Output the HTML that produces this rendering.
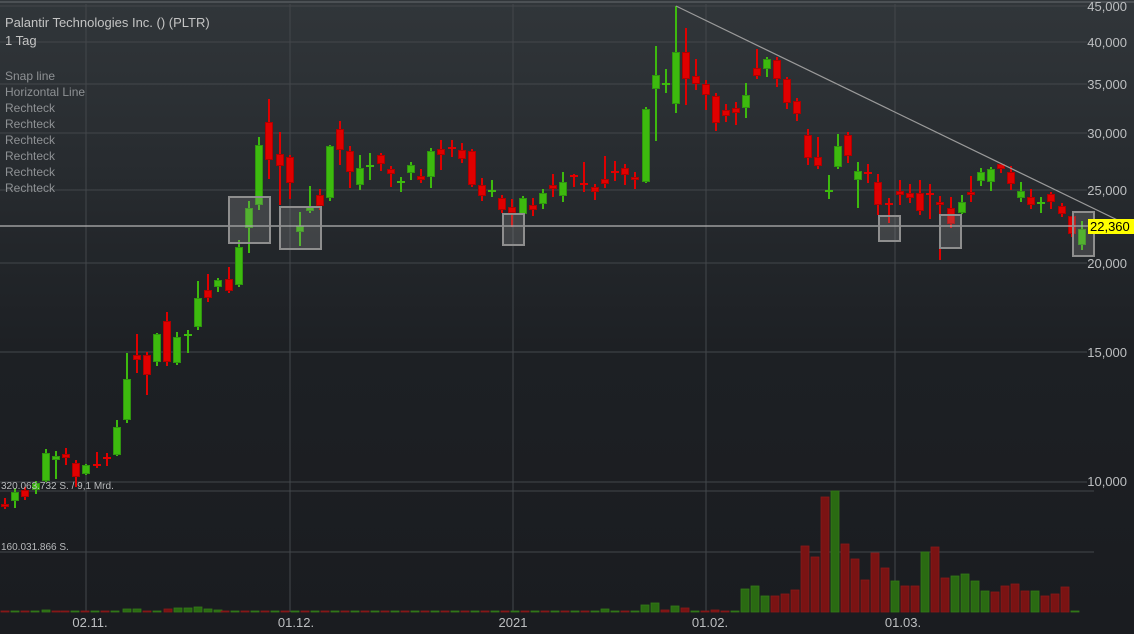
<!DOCTYPE html>
<html><head><meta charset="utf-8"><style>
html,body{margin:0;padding:0;background:#1a1c20;}
svg{display:block;font-family:"Liberation Sans",sans-serif;}
</style></head><body>
<svg id="s" width="1134" height="634" viewBox="0 0 1134 634" xmlns="http://www.w3.org/2000/svg">
<defs><linearGradient id="bg" x1="0" y1="0" x2="0" y2="1">
<stop offset="0" stop-color="#31363a"/><stop offset="0.55" stop-color="#1d2024"/><stop offset="1" stop-color="#1a1c20"/>
</linearGradient></defs>
<rect width="1134" height="634" fill="url(#bg)"/>
<line x1="0" y1="2" x2="1134" y2="2" stroke="#565a5e" stroke-width="1.5"/>
<g id="grid" stroke="#43474b" stroke-width="1"></g>
<g id="vol"></g>
<g id="cand"></g>
<g id="ov"></g>
<g fill="#c4c4c4" font-size="13">
<text x="5" y="27">Palantir Technologies Inc. () (PLTR)</text>
<text x="5" y="45">1 Tag</text>
</g>
<g fill="#8e9194" font-size="12">
<text x="5" y="80">Snap line</text><text x="5" y="96">Horizontal Line</text>
<text x="5" y="112">Rechteck</text><text x="5" y="128">Rechteck</text>
<text x="5" y="144">Rechteck</text><text x="5" y="160">Rechteck</text>
<text x="5" y="176">Rechteck</text><text x="5" y="192">Rechteck</text>
</g>
<g fill="#b8babc" font-size="10">
<text x="1" y="489">320.063.732 S. / 9,1 Mrd.</text>
<text x="1" y="550">160.031.866 S.</text>
</g>
<g fill="#bdbfc1" font-size="13" text-anchor="end">
<text x="1127" y="11">45,000</text><text x="1127" y="47">40,000</text>
<text x="1127" y="89">35,000</text><text x="1127" y="138">30,000</text>
<text x="1127" y="195">25,000</text><text x="1127" y="268">20,000</text>
<text x="1127" y="357">15,000</text><text x="1127" y="486">10,000</text>
</g>
<g fill="#bdbfc1" font-size="13" text-anchor="middle">
<text x="90" y="627">02.11.</text><text x="296" y="627">01.12.</text>
<text x="513" y="627">2021</text><text x="710" y="627">01.02.</text><text x="903" y="627">01.03.</text>
</g>
<rect x="1088" y="219" width="46" height="15" fill="#ffff00"/>
<text x="1090" y="231" font-size="13" fill="#000">22,360</text>
</svg>
<script>
var NS="http://www.w3.org/2000/svg";
function el(g,t,a){var e=document.createElementNS(NS,t);for(var k in a)e.setAttribute(k,a[k]);document.getElementById(g).appendChild(e);return e;}
[6,42,84,133,190,263,352,482].forEach(function(y){el("grid","line",{x1:0,y1:y,x2:1087,y2:y});});
[491,552].forEach(function(y){el("grid","line",{x1:0,y1:y,x2:1094,y2:y});});
[86,290,513,706,895].forEach(function(x){el("grid","line",{x1:x,y1:4,x2:x,y2:612});});
var C=[[5,504,507,498,509,'r'],[15,492,501,488,508,'g'],[25,490,497,487,500,'r'],[36,483,490,481,494,'g'],[46,453,481,449,482,'g'],[56,456,460,451,479,'g'],[66,454,458,448,465,'r'],[76,463,477,460,487,'r'],[86,465,474,464,475,'g'],[97,465,465,452,468,'r'],[107,458,458,453,466,'r'],[117,427,455,420,456,'g'],[127,379,420,353,423,'g'],[137,355,360,334,373,'r'],[147,355,375,352,395,'r'],[157,334,362,333,366,'g'],[167,321,362,312,366,'r'],[177,337,363,332,365,'g'],[188,335,335,330,353,'g'],[198,298,327,281,330,'g'],[208,290,298,274,302,'r'],[218,280,287,278,292,'g'],[229,279,291,267,293,'r'],[239,247,285,240,287,'g'],[249,208,228,201,253,'g'],[259,145,205,137,210,'g'],[269,122,160,99,179,'r'],[280,154,166,132,205,'r'],[290,157,183,155,199,'r'],[300,226,232,212,246,'g'],[310,206,211,186,213,'g'],[320,195,206,189,210,'r'],[330,146,198,145,201,'g'],[340,129,150,121,165,'r'],[350,151,172,146,188,'r'],[360,168,185,155,190,'g'],[370,166,166,153,180,'g'],[381,155,164,153,171,'r'],[391,169,174,166,187,'r'],[401,182,182,177,192,'g'],[411,165,173,162,180,'g'],[421,176,180,169,183,'r'],[431,151,177,148,188,'g'],[441,149,155,140,170,'r'],[452,148,148,140,157,'r'],[462,150,159,143,163,'r'],[472,151,185,149,187,'r'],[482,185,196,178,201,'r'],[492,191,191,180,197,'g'],[502,198,210,195,213,'r'],[512,207,213,199,227,'r'],[523,198,214,196,215,'g'],[533,205,210,198,216,'r'],[543,193,204,189,209,'g'],[553,185,189,174,197,'r'],[563,182,196,172,202,'g'],[574,176,176,174,187,'r'],[584,184,184,162,192,'r'],[595,187,192,184,200,'r'],[605,179,184,156,188,'r'],[615,172,172,161,181,'r'],[625,168,175,164,185,'r'],[635,177,180,172,189,'r'],[646,109,182,107,183,'g'],[656,75,89,46,141,'g'],[666,84,84,69,93,'g'],[676,52,104,6,113,'g'],[686,52,79,28,105,'r'],[696,76,84,59,90,'r'],[706,84,95,80,110,'r'],[716,96,123,93,131,'r'],[726,110,116,104,122,'r'],[736,108,113,102,125,'r'],[746,95,108,83,118,'g'],[757,68,76,49,79,'r'],[767,59,69,57,77,'g'],[777,60,79,57,87,'r'],[787,79,103,77,109,'r'],[797,101,114,98,121,'r'],[808,135,158,129,165,'r'],[818,157,166,137,169,'r'],[829,191,191,175,199,'g'],[838,146,167,134,169,'g'],[848,135,156,132,163,'r'],[858,171,180,162,208,'g'],[868,173,173,164,183,'r'],[878,182,205,174,215,'r'],[889,204,204,198,223,'r'],[900,191,195,180,205,'r'],[910,193,198,184,203,'r'],[920,193,211,180,215,'r'],[930,194,194,184,219,'r'],[940,202,205,196,260,'r'],[951,208,224,197,228,'r'],[962,202,213,195,214,'g'],[971,192,195,176,202,'r'],[981,172,181,168,186,'g'],[991,169,182,167,191,'g'],[1001,164,169,163,173,'r'],[1011,172,184,166,190,'r'],[1021,191,198,182,202,'g'],[1031,197,205,189,209,'r'],[1041,203,203,197,213,'g'],[1051,194,202,192,209,'r'],[1062,206,214,203,217,'r'],[1072,216,234,216,237,'r'],[1082,229,245,221,250,'g']];
C.forEach(function(c){var col=c[5]=='g'?'#3dba0e':'#e00000',bd=c[5]=='g'?'#2f9410':'#b00000';
el("cand","rect",{x:c[0]-1,y:c[3],width:2,height:c[4]-c[3],fill:col});
if(c[2]-c[1]<2){el("cand","rect",{x:c[0]-4,y:c[1]-1,width:8,height:2,fill:col});}
else el("cand","rect",{x:c[0]-3.5,y:c[1]+0.5,width:7,height:c[2]-c[1]-1,fill:col,stroke:bd,"stroke-width":1});});
var V={46:[610,'g'],56:[611,'r'],127:[609,'g'],137:[609,'g'],147:[611,'r'],157:[611,'g'],168:[609,'r'],178:[608,'g'],188:[608,'g'],198:[607,'g'],208:[609,'g'],218:[610,'g'],229:[610,'r'],239:[608,'g'],249:[606,'g'],259:[603,'g'],269:[604,'r'],280:[607,'r'],290:[610,'r'],300:[608,'r'],310:[609,'g'],320:[610,'r'],330:[608,'g'],340:[608,'r'],350:[610,'r'],421:[604,'r'],431:[609,'g'],605:[609,'g'],615:[611,'g'],645:[605,'g'],655:[603,'g'],665:[610,'r'],675:[606,'g'],685:[608,'r'],715:[610,'r'],745:[589,'g'],755:[586,'g'],765:[596,'g'],775:[596,'r'],785:[594,'r'],795:[590,'r'],805:[546,'r'],815:[557,'r'],825:[497,'r'],835:[491,'g'],845:[544,'r'],855:[559,'r'],865:[580,'r'],875:[553,'r'],885:[568,'r'],895:[581,'g'],905:[586,'r'],915:[586,'r'],925:[552,'g'],935:[547,'r'],945:[578,'r'],955:[576,'g'],965:[574,'g'],975:[581,'g'],985:[591,'g'],995:[592,'r'],1005:[586,'r'],1015:[584,'r'],1025:[591,'r'],1035:[591,'g'],1045:[596,'r'],1055:[594,'r'],1065:[587,'r']};
for(var x=5;x<1080;x+=10){var k=Math.round(x),y=611,t=(Math.floor(x/10)%2)?'g':'r';
for(var d=-3;d<=3;d++)if(V[k+d]){y=V[k+d][0];t=V[k+d][1];k=k+d;break;}
el("vol","rect",{x:k-4,y:y,width:8,height:612-y,fill:t=='g'?'#2a6a12':'#7a1313',stroke:t=='g'?'#347a1a':'#8a1a1a',"stroke-width":0.8});}
el("ov","line",{x1:0,y1:226,x2:1094,y2:226,stroke:"#b4b4b4","stroke-width":1.2});
el("ov","line",{x1:676,y1:6,x2:1134,y2:228,stroke:"#9a9a9a","stroke-width":1.2});
[[229,197,41,46],[280,207,41,42],[503,214,21,31],[879,216,21,25],[940,215,21,33],[1073,212,21,44]].forEach(function(r){
el("ov","rect",{x:r[0],y:r[1],width:r[2],height:r[3],fill:"rgba(150,150,150,0.25)",stroke:"#8e8e8e","stroke-width":2});});
</script>
</body></html>
